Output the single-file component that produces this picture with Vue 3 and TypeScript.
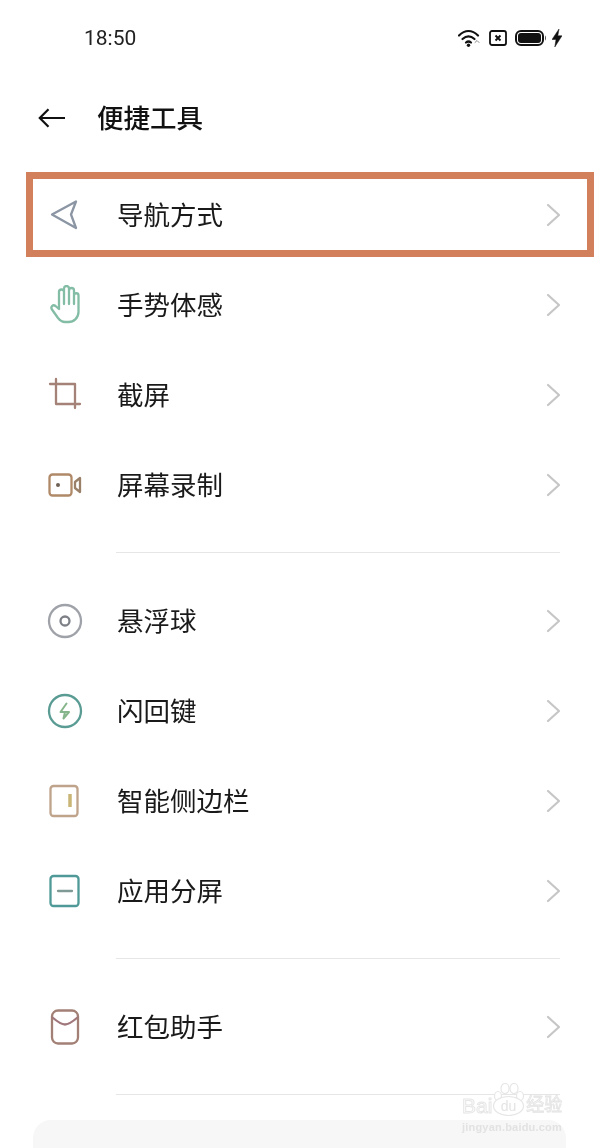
<script setup lang="ts">
// OPPO-style settings list: icons are keyed by name and drawn in a 40x40 box.
type Row = { label: string; icon: string };

const groups: Row[][] = [
  [
    { label: '导航方式', icon: 'nav' },
    { label: '手势体感', icon: 'hand' },
    { label: '截屏', icon: 'crop' },
    { label: '屏幕录制', icon: 'video' },
  ],
  [
    { label: '悬浮球', icon: 'ball' },
    { label: '闪回键', icon: 'flash' },
    { label: '智能侧边栏', icon: 'side' },
    { label: '应用分屏', icon: 'split' },
  ],
  [{ label: '红包助手', icon: 'mail' }],
];
</script>

<template>
  <div class="page">
    <div class="status">
      <span class="time">18:50</span>
      <div class="status-icons">
        <svg width="22" height="18" viewBox="0 0 22 18" fill="none" stroke="#111" stroke-width="2.200" stroke-linecap="round">
          <path d="M1 6.500C7 .5 14 .5 20 6.500" />
          <path d="M4.500 10C8.500 6.500 12.500 6.500 16.500 10" />
          <path d="M8 13.500C9.500 12.300 11.500 12.300 13 13.500" />
          <circle cx="10.500" cy="16.200" r="1.700" fill="#111" stroke="none" />
          <path d="M17 13.500l2-2 2 2" stroke="#888" stroke-width="1" />
        </svg>
        <svg width="18" height="16" viewBox="0 0 18 16" fill="none" stroke="#111">
          <rect x="1" y="1" width="16" height="14" rx="2" stroke-width="1.800" />
          <path d="M6.500 5.500l5 5M11.500 5.500l-5 5" stroke-width="1.900" />
        </svg>
        <svg class="battery" width="32" height="16" viewBox="0 0 32 16" fill="none">
          <rect x="1" y="1" width="27" height="14" rx="5" stroke="#111" stroke-width="2" />
          <rect x="3" y="3" width="23" height="10" rx="3" fill="#111" />
          <path d="M30 5.500c1.300.5 1.300 4.500 0 5z" fill="#555" />
        </svg>
        <svg width="10" height="18" viewBox="0 0 10 18">
          <path d="M7 0L0 10.500H4L2.800 18L10 6.800H5.800z" fill="#111" stroke="#111" stroke-width=".5" />
        </svg>
      </div>
    </div>

    <header class="header">
      <svg width="28" height="20" viewBox="0 0 28 20" fill="none" stroke="#111" stroke-width="2.200">
        <path d="M27 10H2M10.500 1.200L1.800 10l8.700 8.800" />
      </svg>
      <h1>便捷工具</h1>
    </header>

    <main class="list">
      <section v-for="(group, i) in groups" :key="i" class="group">
        <div v-for="row in group" :key="row.label" class="row">
          <svg class="icon" width="40" height="40" viewBox="0 0 40 40" fill="none" stroke-width="2.300" stroke-linecap="round" stroke-linejoin="round">
            <template v-if="row.icon === 'nav'">
              <path d="M31 6.500L7 19.500 31 33l-5-13.500z" stroke="#8b95a3" />
            </template>
            <template v-else-if="row.icon === 'hand'">
              <path stroke="#84bda6" d="M14 24V7a2.500 2.500 0 0 1 5 0V19M19 19V3.500a2.500 2.500 0 0 1 5 0V19M24 19V5.500a2.500 2.500 0 0 1 5 0V19M29 19V10.500a2.200 2.200 0 0 1 4.500 0V27a10 10 0 0 1-10 10H20c-3 0-5-1.500-7-4L7 24.500c-1.800-2.500 1-5.500 3.500-3.500L14 24" />
            </template>
            <template v-else-if="row.icon === 'crop'">
              <path stroke="#a58277" d="M5 9h25v24M11 4v25h24" />
            </template>
            <template v-else-if="row.icon === 'video'">
              <rect x="4.500" y="9.500" width="22" height="21" rx="3" stroke="#b08a68" />
              <circle cx="13" cy="20" r="2" fill="#6f6155" stroke="none" />
              <path d="M30 17l5-4v14l-5-4z" stroke="#9a8068" />
            </template>
            <template v-else-if="row.icon === 'ball'">
              <circle cx="20" cy="20" r="16" stroke="#9fa2a8" />
              <circle cx="20" cy="20" r="4.500" stroke="#7d8087" />
            </template>
            <template v-else-if="row.icon === 'flash'">
              <circle cx="20" cy="20" r="16" stroke="#5a9c94" />
              <path d="M21.500 12.500L15.500 21H24L18.500 27.500l1.500-6.500" stroke="#86b58c" stroke-width="2" />
            </template>
            <template v-else-if="row.icon === 'side'">
              <rect x="5.500" y="5" width="27" height="30" rx="3" stroke="#bfa38b" />
              <path d="M25 13v13" stroke="#c9b677" stroke-width="3.500" stroke-linecap="butt" />
            </template>
            <template v-else-if="row.icon === 'split'">
              <rect x="5.500" y="5" width="28" height="30" rx="3" stroke="#4f9a98" />
              <path d="M13 20h14" stroke="#7f9a94" />
            </template>
            <template v-else-if="row.icon === 'mail'">
              <rect x="7" y="3.500" width="26" height="33" rx="6" stroke="#a38075" />
              <path d="M7.500 10.500c3.500 3 8.500 7 12.500 7s9-4 12.500-7" stroke="#a0787c" />
            </template>
          </svg>
          <span class="label">{{ row.label }}</span>
          <svg class="chevron" width="16" height="24" viewBox="0 0 16 24" fill="none" stroke="#c6c6c6" stroke-width="2.200" stroke-linecap="round" stroke-linejoin="round">
            <path d="M2 2l11 10L2 22" />
          </svg>
        </div>
        <div class="divider"></div>
      </section>
    </main>

    <div class="card"></div>

    <div class="highlight"></div>

    <div class="watermark">
      <div class="wm-main">
        <span class="wm-text">Bai</span>
        <svg class="wm-logo" width="33" height="33" viewBox="0 0 33 33" fill="#fff" stroke="#e6e6e6" stroke-width="1.200">
          <ellipse cx="6" cy="13" rx="3.500" ry="4.500" />
          <ellipse cx="13" cy="5.500" rx="4" ry="5" />
          <ellipse cx="22" cy="5.500" rx="4" ry="5" />
          <ellipse cx="28" cy="13" rx="3.500" ry="4.500" />
          <ellipse cx="16.500" cy="23" rx="15" ry="9.500" />
          <text x="16.500" y="28" text-anchor="middle" font-size="14" fill="#e4e4e4" stroke="none">du</text>
        </svg>
        <span class="wm-text wm-cn">经验</span>
      </div>
      <div class="wm-url">jingyan.baidu.com</div>
    </div>
  </div>
</template>

<style scoped>
.page {
  position: relative;
  width: 600px;
  height: 1148px;
  overflow: hidden;
  background: #fff;
  color: #111;
  font-family: "Noto Sans CJK SC", "Noto Sans", sans-serif;
  filter: blur(0.35px);
}

.status {
  height: 76px;
  display: flex;
  align-items: center;
  justify-content: space-between;
  padding: 0 38px 0 84px;
  box-sizing: border-box;
}

.time {
  font-family: Roboto, "Liberation Sans", sans-serif;
  font-size: 21px;
  color: #222;
}

.status-icons {
  display: flex;
  align-items: center;
  gap: 9px;
}

.battery {
  margin-left: -1px;
  margin-right: -4px;
}

.header {
  height: 84px;
  display: flex;
  align-items: center;
  gap: 31px;
  padding-left: 38px;
}

.header h1 {
  margin: 0 0 2px;
  font-size: 26.5px;
  font-weight: 500;
  line-height: 1;
}

.list {
  padding-top: 10px;
}

.row {
  height: 90px;
  display: flex;
  align-items: center;
  padding: 0 38px 0 45px;
}

.icon {
  flex: none;
}

.label {
  flex: 1;
  margin-left: 32px;
  padding-bottom: 2px;
  font-size: 26.5px;
  line-height: 1;
  color: #1a1a1a;
}

.chevron {
  flex: none;
}

.divider {
  height: 1px;
  margin: 22px 40px 23px 116px;
  background: #e6e6e6;
}

.card {
  position: absolute;
  left: 33px;
  right: 34px;
  top: 1120px;
  height: 60px;
  border-radius: 18px;
  background: #f7f7f7;
}

.highlight {
  position: absolute;
  left: 26px;
  top: 172px;
  width: 568px;
  height: 85px;
  box-sizing: border-box;
  border: 7px solid #d27f5b;
  pointer-events: none;
}

.watermark {
  position: absolute;
  left: 462px;
  top: 1083px;
  width: 103px;
  font-family: "Liberation Sans", "Noto Sans CJK SC", sans-serif;
}

.wm-main {
  display: flex;
  align-items: flex-end;
  height: 33px;
}

.wm-text {
  font-size: 21px;
  line-height: 21px;
  color: #fff;
  -webkit-text-stroke: 1px #e6e6e6;
}

.wm-logo {
  flex: none;
  margin: 0 1px 0 0;
}

.wm-cn {
  font-size: 18px;
  -webkit-text-stroke: 0.8px #e4e4e4;
  color: #f6f6f6;
}

.wm-url {
  margin-top: 5px;
  font-size: 11px;
  line-height: 13px;
  font-weight: 700;
  letter-spacing: 0.2px;
  white-space: nowrap;
  color: #e2e2e2;
}
</style>
